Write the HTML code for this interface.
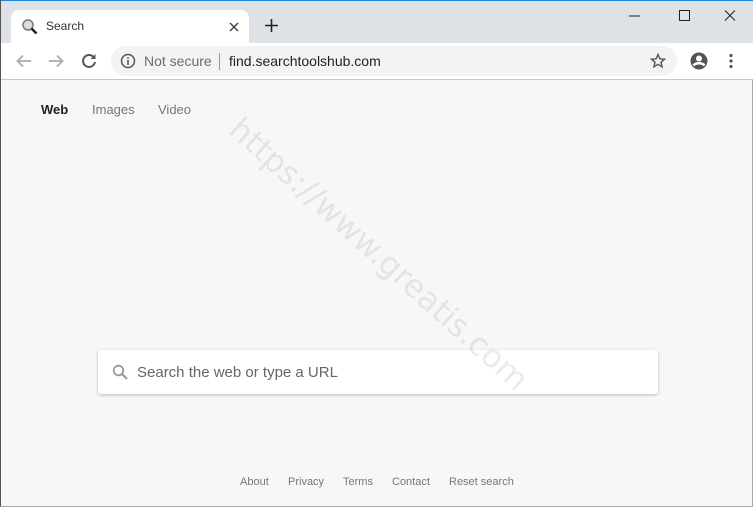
<!DOCTYPE html>
<html><head><style>
*{margin:0;padding:0;box-sizing:border-box}
body{width:753px;height:507px;overflow:hidden;background:#f7f7f7;font-family:"Liberation Sans",Arial,sans-serif;position:relative;border-left:1px solid #555;border-right:1px solid #aaa;border-bottom:1px solid #aaa}
.top{position:absolute;left:0;top:0;width:753px;height:1px;background:#1a84d8}
.tabbar{position:absolute;left:0;top:1px;width:753px;height:42px;background:#dee1e6}
.tab{position:absolute;left:10px;top:9px;width:238px;height:34px;background:#fff;border-radius:8px 8px 0 0}
.tb{position:absolute;left:0;top:43px;width:753px;height:37px;background:#fff;border-bottom:1px solid #c8c8c8}
.omni{position:absolute;left:110px;top:3px;width:566px;height:30px;background:#f1f3f4;border-radius:15px}
.t{position:absolute;white-space:nowrap}
.sb{position:absolute;left:97px;top:350px;width:560px;height:44px;background:#fff;border-radius:3px;box-shadow:0 1px 3px rgba(0,0,0,.25)}
.ft{position:absolute;top:476px;font-size:11px;color:#777}
.wm{position:absolute;left:378px;top:254px;font-size:32px;color:rgba(0,0,0,.08);transform:translate(-50%,-50%) rotate(42deg);font-family:'DejaVu Sans',sans-serif;white-space:nowrap;z-index:5}
</style></head><body>
<div class="top"></div>
<div class="tabbar">
<div class="tab">
<svg style="position:absolute;left:10px;top:8px" width="18" height="18" viewBox="0 0 18 18"><circle cx="7" cy="7" r="5" fill="#ddd" stroke="#777" stroke-width="1.5"/><path d="M10.5 10.5l5 5" stroke="#222" stroke-width="2.5"/></svg>
<div class="t" style="left:35px;top:9px;font-size:12px;color:#333">Search</div>
<svg style="position:absolute;left:218px;top:12px" width="10" height="10"><path d="M1 1l8 8M9 1l-8 8" stroke="#444" stroke-width="1.5"/></svg>
</div>
<svg style="position:absolute;left:264px;top:18px" width="13" height="13"><path d="M6.5 0v13M0 6.5h13" stroke="#222" stroke-width="1.6"/></svg>
<svg style="position:absolute;left:628px;top:9px" width="110" height="12"><path d="M0 6h11" stroke="#222"/><rect x="50.5" y="0.5" width="10" height="10" fill="none" stroke="#222"/><path d="M96 0.5l10 10M106 0.5l-10 10" stroke="#222"/></svg>
</div>
<div class="tb">
<svg style="position:absolute;left:14px;top:9px" width="18" height="18" viewBox="0 0 18 18"><path d="M16 9H3M8 3.5L2.5 9 8 14.5" fill="none" stroke="#aaa" stroke-width="1.8"/></svg>
<svg style="position:absolute;left:46px;top:9px" width="18" height="18" viewBox="0 0 18 18"><path d="M2 9h13M10 3.5L15.5 9 10 14.5" fill="none" stroke="#aaa" stroke-width="1.8"/></svg>
<svg style="position:absolute;left:79px;top:9px" width="18" height="18" viewBox="0 0 18 18"><path d="M14 5.5A6 6 0 1 0 15 10" fill="none" stroke="#555" stroke-width="2"/><path d="M15.5 2v5h-5z" fill="#555"/></svg>
<div class="omni">
<svg style="position:absolute;left:9px;top:7px" width="16" height="16"><circle cx="8" cy="8" r="6.5" fill="none" stroke="#555" stroke-width="1.5"/><path d="M8 7v5M8 4.5v1.5" stroke="#555" stroke-width="1.6"/></svg>
<div class="t" style="left:33px;top:7px;font-size:14px;color:#6d6d6d">Not secure</div>
<div style="position:absolute;left:108px;top:7px;width:1px;height:17px;background:#999"></div>
<div class="t" style="left:118px;top:7px;font-size:14px;color:#222">find.searchtoolshub.com</div>
<svg style="position:absolute;left:539px;top:7px" width="16" height="16" viewBox="0 0 16 16"><path d="M8 1.5l1.9 4.3 4.6.4-3.5 3 1.1 4.6L8 11.4 3.9 13.8 5 9.2 1.5 6.2l4.6-.4z" fill="none" stroke="#555" stroke-width="1.4"/></svg>
</div>
<svg style="position:absolute;left:689px;top:9px" width="18" height="18" viewBox="0 0 18 18"><circle cx="9" cy="9" r="8.5" fill="#555"/><circle cx="9" cy="6.5" r="3" fill="#fff"/><path d="M3.5 13.5c2-3 9-3 11 0" stroke="#fff" stroke-width="2.5" fill="none"/></svg>
<svg style="position:absolute;left:727px;top:10px" width="6" height="17"><circle cx="3" cy="2.5" r="1.6" fill="#555"/><circle cx="3" cy="8" r="1.6" fill="#555"/><circle cx="3" cy="13.5" r="1.6" fill="#555"/></svg>
</div>
<div class="t" style="left:40px;top:102px;font-size:13px;font-weight:bold;color:#222">Web</div>
<div class="t" style="left:91px;top:102px;font-size:13px;color:#777">Images</div>
<div class="t" style="left:157px;top:102px;font-size:13px;color:#777">Video</div>
<div class="sb">
<svg style="position:absolute;left:14px;top:14px" width="16" height="16"><circle cx="6.5" cy="6.5" r="4.8" fill="none" stroke="#999" stroke-width="1.8"/><path d="M10 10l5 5" stroke="#999" stroke-width="2"/></svg>
<div class="t" style="left:39px;top:14px;font-size:15px;color:#666">Search the web or type a URL</div>
</div>
<div class="wm">https://www.greatis.com</div>
<div class="ft" style="left:239px">About</div>
<div class="ft" style="left:287px">Privacy</div>
<div class="ft" style="left:342px">Terms</div>
<div class="ft" style="left:391px">Contact</div>
<div class="ft" style="left:448px">Reset search</div>
</body></html>
